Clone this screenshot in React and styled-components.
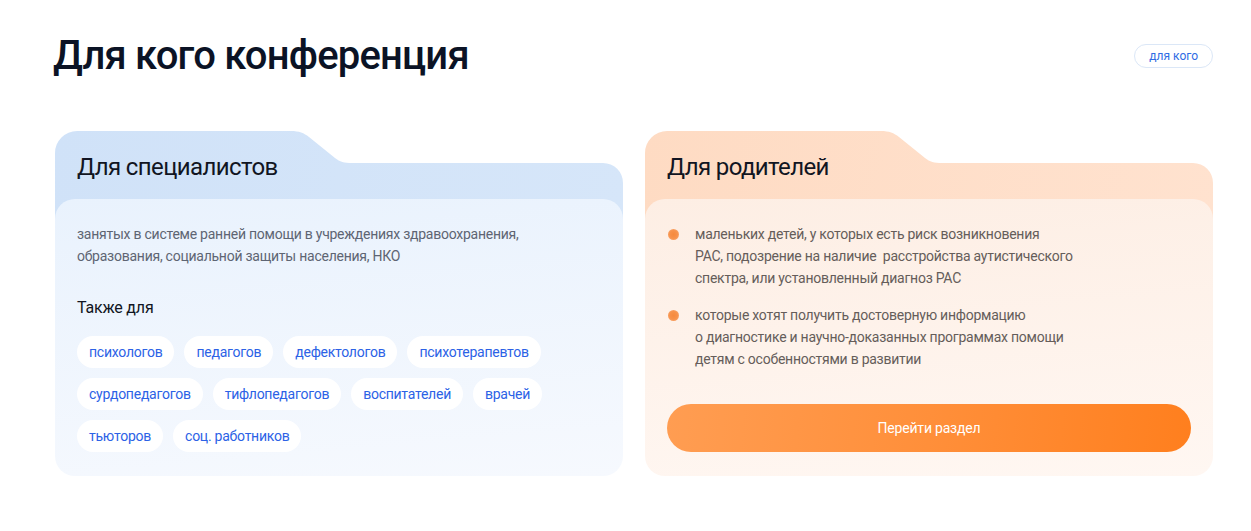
import React from "react";
import styled, { createGlobalStyle } from "styled-components";

const GlobalStyle = createGlobalStyle`
  body {
    margin: 0;
    background: #ffffff;
    font-family: Roboto, "Noto Sans", "Liberation Sans", sans-serif;
  }
`;

const specialists = [
  "психологов",
  "педагогов",
  "дефектологов",
  "психотерапевтов",
  "сурдопедагогов",
  "тифлопедагогов",
  "воспитателей",
  "врачей",
  "тьюторов",
  "соц. работников",
];

const FOLDER_PATH =
  "path('M0,22 A22,22 0 0 1 22,0 L236,0 C244,0 249,2 254,6 L280,27 C285,31 289,32 297,32 L548,32 A20,20 0 0 1 568,52 L568,88 L0,88 Z')";

function App() {
  return (
    <>
      <GlobalStyle />
      <Section>
        <TopRow>
          <Heading>Для кого конференция</Heading>
          <Badge>для кого</Badge>
        </TopRow>
        <Cards>
          <Card>
            <Head $tone="blue">
              <HeadTitle>Для специалистов</HeadTitle>
            </Head>
            <Panel $tone="blue">
              <Lead>
                занятых в системе ранней помощи в учреждениях здравоохранения,
                <br />
                образования, социальной защиты населения, НКО
              </Lead>
              <SubTitle>Также для</SubTitle>
              <Chips>
                {specialists.map((item) => (
                  <Chip key={item}>{item}</Chip>
                ))}
              </Chips>
            </Panel>
          </Card>
          <Card>
            <Head $tone="orange">
              <HeadTitle>Для родителей</HeadTitle>
            </Head>
            <Panel $tone="orange">
              <List>
                <Item>
                  <Dot />
                  <ItemText>
                    маленьких детей, у которых есть риск возникновения
                    <br />
                    РАС, подозрение на наличие&nbsp; расстройства аутистического
                    <br />
                    спектра, или установленный диагноз РАС
                  </ItemText>
                </Item>
                <Item>
                  <Dot />
                  <ItemText>
                    которые хотят получить достоверную информацию
                    <br />
                    о диагностике и научно-доказанных программах помощи
                    <br />
                    детям с особенностями в развитии
                  </ItemText>
                </Item>
              </List>
              <ActionButton>Перейти раздел</ActionButton>
            </Panel>
          </Card>
        </Cards>
      </Section>
    </>
  );
}

const Section = styled.section`
  padding: 32px 38px 40px 55px;
`;

const TopRow = styled.div`
  display: flex;
  align-items: center;
  justify-content: space-between;
`;

const Heading = styled.h2`
  margin: 0 0 0 -2px;
  font-size: 40px;
  line-height: 48px;
  font-weight: 500;
  letter-spacing: -0.8px;
  color: #0b1325;
`;

const Badge = styled.span`
  display: inline-flex;
  align-items: center;
  height: 22px;
  padding: 0 14px;
  border: 1px solid #dbe7f7;
  border-radius: 12px;
  font-size: 12px;
  color: #2f6ce4;
`;

const Cards = styled.div`
  display: grid;
  grid-template-columns: 568px 568px;
  gap: 22px;
  margin-top: 51px;
`;

const Card = styled.div`
  display: flex;
  flex-direction: column;
`;

const Head = styled.div`
  height: 88px;
  padding: 21px 22px 0;
  box-sizing: border-box;
  clip-path: ${FOLDER_PATH};
  background: ${(p) =>
    p.$tone === "blue"
      ? "linear-gradient(100deg, #d0e2f8 0%, #d6e6f9 100%)"
      : "linear-gradient(100deg, #fedbc3 0%, #ffe2cf 100%)"};
`;

const HeadTitle = styled.h3`
  margin: 0;
  font-size: 24px;
  line-height: 30px;
  font-weight: 400;
  letter-spacing: -0.6px;
  color: #111522;
`;

const Panel = styled.div`
  position: relative;
  flex: 1;
  display: flex;
  flex-direction: column;
  margin-top: -20px;
  padding: 24px 22px 24px;
  border-radius: 20px;
  background: ${(p) =>
    p.$tone === "blue"
      ? "linear-gradient(175deg, #e9f2fd 0%, #f6f9fe 100%)"
      : "linear-gradient(175deg, #fdeee4 0%, #fff7f2 100%)"};
`;

const Lead = styled.p`
  margin: 0;
  font-size: 14px;
  line-height: 22px;
  letter-spacing: -0.25px;
  color: #5e6573;
`;

const SubTitle = styled.h4`
  margin: 29px 0 0;
  font-size: 16px;
  line-height: 24px;
  font-weight: 400;
  letter-spacing: -0.2px;
  color: #111522;
`;

const Chips = styled.div`
  display: flex;
  flex-wrap: wrap;
  gap: 10px;
  margin-top: 16px;
`;

const Chip = styled.span`
  height: 32px;
  line-height: 32px;
  padding: 0 12px;
  border-radius: 16px;
  background: #ffffff;
  font-size: 14px;
  letter-spacing: -0.25px;
  color: #2c62e6;
`;

const List = styled.ul`
  display: flex;
  flex-direction: column;
  gap: 15px;
  margin: 0;
  padding: 0;
  list-style: none;
`;

const Item = styled.li`
  display: flex;
  align-items: flex-start;
  gap: 16px;
`;

const Dot = styled.span`
  flex: none;
  width: 11px;
  height: 11px;
  margin: 6px 0 0 1px;
  border-radius: 50%;
  background: radial-gradient(circle, #f68a3d 0%, #f7924a 50%, #f9b587 100%);
`;

const ItemText = styled.p`
  margin: 0;
  font-size: 14px;
  line-height: 22px;
  letter-spacing: -0.25px;
  color: #655d5a;
`;

const ActionButton = styled.button`
  margin-top: auto;
  height: 48px;
  border: none;
  border-radius: 24px;
  background: linear-gradient(95deg, #ff9d52 0%, #ff8f3a 50%, #ff7f1e 100%);
  font-family: inherit;
  font-size: 14px;
  font-weight: 400;
  letter-spacing: -0.2px;
  color: #ffffff;
  cursor: pointer;
`;

export default App;
